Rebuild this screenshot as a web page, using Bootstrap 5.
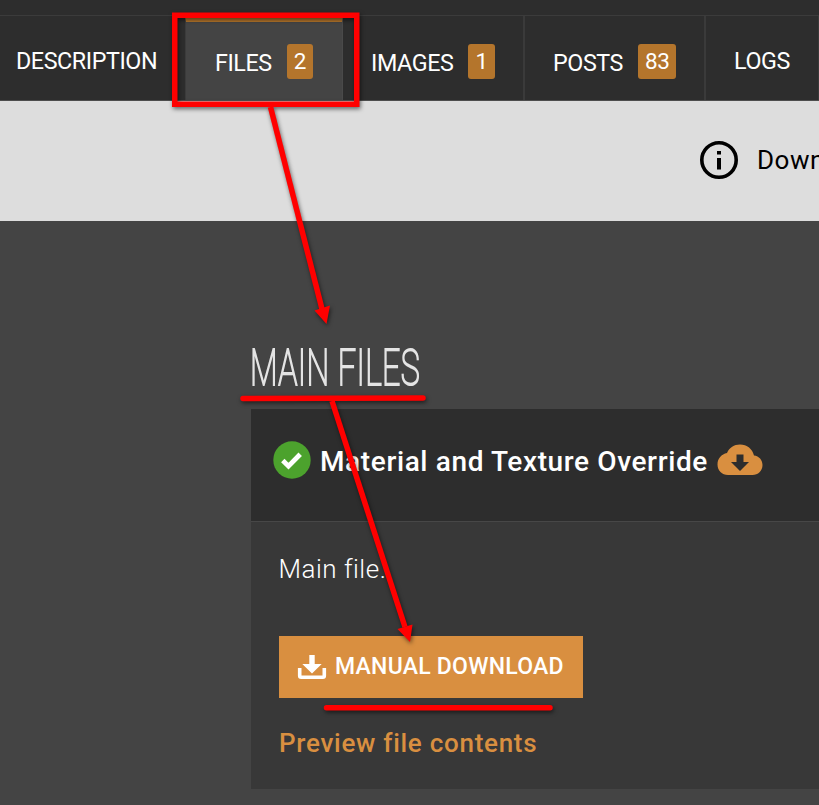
<!DOCTYPE html>
<html lang="en">
<head>
<meta charset="utf-8">
<meta name="viewport" content="width=device-width, initial-scale=1">
<title>Files</title>
<link href="https://cdn.jsdelivr.net/npm/bootstrap@5.3.0/dist/css/bootstrap.min.css" rel="stylesheet">
<style>
  body { background: #444; color: #fff; font-family: Roboto, "Liberation Sans", sans-serif; height: 805px; }
  .topstrip { height: 16px; background: #2d2d2d; border-bottom: 1px solid #3b3b3b; }
  .tabs { height: 85px; background: #2d2d2d; border-bottom: 1px solid #4d4d4d; flex-wrap: nowrap; }
  .tabs .nav-link { color: #fff; font-size: 23.3px; line-height: 34px; padding: 0; white-space: nowrap; height: 84px; letter-spacing: -.42px; }
  .tabs .t-desc { width: 185px; padding: 3px 0 0 16px; }
  .tabs .t-files { width: 158px; padding: 1px 0 0 29px; background: #444; border-top: 6px solid #b4752c; border-left: 1px solid #3b3b3b; border-right: 1px solid #4a4a4a; }
  .tabs .t-images, .tabs .t-posts { padding: 7px 0 0 28px; }
  .t-images { width: 182px; border-right: 2px solid #3a3a3a; }
  .t-posts { width: 181px; border-right: 2px solid #3a3a3a; }
  .tabs .t-logs { width: 113px; padding: 3px 0 0 28px; border-right: 1px solid #3a3a3a; }
  .lbl { padding-top: 2px; }
  .count { background: #b4752c; border-radius: 3px; height: 35px; padding: 0 7px; font-size: 22.500px; line-height: 34px; margin-left: 15px; }
  .notice { height: 120px; background: #ddd; color: #000; padding: 0 0 2px 699px; font-size: 26px; letter-spacing: .5px; gap: 18px; }
  .section-title { margin: 116px 0 0 249.500px; height: 72px; font-size: 50px; font-weight: 100; line-height: 62px; letter-spacing: .6px; color: #e4e4e4; white-space: nowrap; -webkit-text-stroke: 2px #e4e4e4; transform: scaleX(.642); transform-origin: 0 0; width: 400px; }
  .filecard { width: 600px; margin-left: 251px; background: #383838; border: 0; border-radius: 0; color: #fff; }
  .filehead { height: 113px; background: #2d2d2d; border-bottom: 1px solid #474747; padding: 0 0 10px 21.500px; border-radius: 0 !important; }
  .filename { font-size: 28px; font-weight: 500; letter-spacing: .62px; margin: 0 9.500px 0 9.500px; line-height: 36px; white-space: nowrap; padding-top: 3px; }
  .filebody { height: 267px; padding: 28px 28px 0; }
  .desc { font-size: 26px; font-weight: 300; line-height: 38px; letter-spacing: .5px; margin: 0 0 48px -.5px; }
  .dl { width: 304px; height: 62px; background: #d98f40; border: 0; border-radius: 0; color: #fff; font-size: 23px; font-weight: 500; letter-spacing: .25px; padding: 0 0 0 18px; gap: 8px; white-space: nowrap; }
  .preview { color: #d98f40; font-size: 26px; font-weight: 500; letter-spacing: .72px; line-height: 38px; margin-top: 26px; text-decoration: none; display: block; }
  .notes { left: 0; top: 0; pointer-events: none; z-index: 5; filter: drop-shadow(1px 2px 2px rgba(0,0,0,.55)); }
</style>
<script src="https://cdn.jsdelivr.net/npm/bootstrap@5.3.0/dist/js/bootstrap.bundle.min.js"></script>
</head>
<body class="overflow-hidden position-relative">
<header>
  <div class="topstrip"></div>
  <nav class="nav tabs">
    <a class="nav-link d-flex align-items-center t-desc" href="#"><span class="lbl">DESCRIPTION</span></a>
    <a class="nav-link d-flex align-items-center t-files" href="#"><span class="lbl">FILES</span><span class="count">2</span></a>
    <a class="nav-link d-flex align-items-center t-images" href="#"><span class="lbl">IMAGES</span><span class="count">1</span></a>
    <a class="nav-link d-flex align-items-center t-posts" href="#"><span class="lbl">POSTS</span><span class="count">83</span></a>
    <a class="nav-link d-flex align-items-center t-logs" href="#"><span class="lbl">LOGS</span></a>
  </nav>
</header>
<div class="notice d-flex align-items-center overflow-hidden">
  <svg class="flex-shrink-0" width="40" height="40" viewBox="0 0 40 40"><circle cx="20" cy="20" r="17.2" fill="none" stroke="#000" stroke-width="3.6"/><path d="M18 11h4v3.600h-4zM18 18h4v11.500h-4z"/></svg>
  <span>Down</span>
</div>
<main>
  <h2 class="section-title">MAIN FILES</h2>
  <section class="card filecard">
    <div class="card-header filehead d-flex align-items-center">
      <svg class="flex-shrink-0" width="38" height="38" viewBox="0 0 38 38"><circle cx="19" cy="19" r="18.700" fill="#4ca22d"/><path d="M9.800 19.500l5.700 5.700L27.200 13.300" fill="none" stroke="#fff" stroke-width="4.800"/></svg>
      <span class="filename">Material and Texture Override</span>
      <svg class="flex-shrink-0" width="46" height="32" viewBox="0 0 46 32"><path fill="#d98f40" fill-rule="evenodd" d="M11 31C5 31 .5 26.500 .5 20.500C.5 14.500 4.500 10 10 9C12.500 3.500 17 .5 23 .5C30 .5 35.500 5 37 11.500C42 12 45.500 16 45.500 21C45.500 27 41 31 35.500 31zM19.500 10.500v7.500h-5.500L23 27l9-9h-5.500v-7.500z"/></svg>
    </div>
    <div class="card-body filebody">
      <p class="desc">Main file.</p>
      <button class="btn dl d-flex align-items-center" type="button">
        <svg class="flex-shrink-0" width="30" height="26" viewBox="0 0 30 26"><path d="M12.300 1h5.400v9h7L15 19.500 5.300 10h7z" fill="#fff"/><path d="M2.700 14v7.800q0 1.500 1.500 1.500h21.600q1.500 0 1.500-1.500V14" fill="none" stroke="#fff" stroke-width="3.600"/></svg>
        <span>MANUAL DOWNLOAD</span>
      </button>
      <a class="preview" href="#">Preview file contents</a>
    </div>
  </section>
</main>
<!-- Hand-drawn guide marks over the page -->
<svg class="notes position-absolute" width="819" height="805" viewBox="0 0 819 805" fill="none" stroke="#f00" stroke-width="5.500">
  <rect x="174.750" y="15.250" width="182" height="89"/>
  <path d="M270.500 107L322 309"/>
  <path d="M314.500 310.500L330 305.500L326.500 324z" fill="#f00" stroke="none"/>
  <path d="M243 398.500L423 398M326.500 707.700L550 707.700" stroke-linecap="round"/>
  <path d="M332 401L405 627"/>
  <path d="M397.500 629L412.500 624.500L410 642z" fill="#f00" stroke="none"/>
</svg>
</body>
</html>
